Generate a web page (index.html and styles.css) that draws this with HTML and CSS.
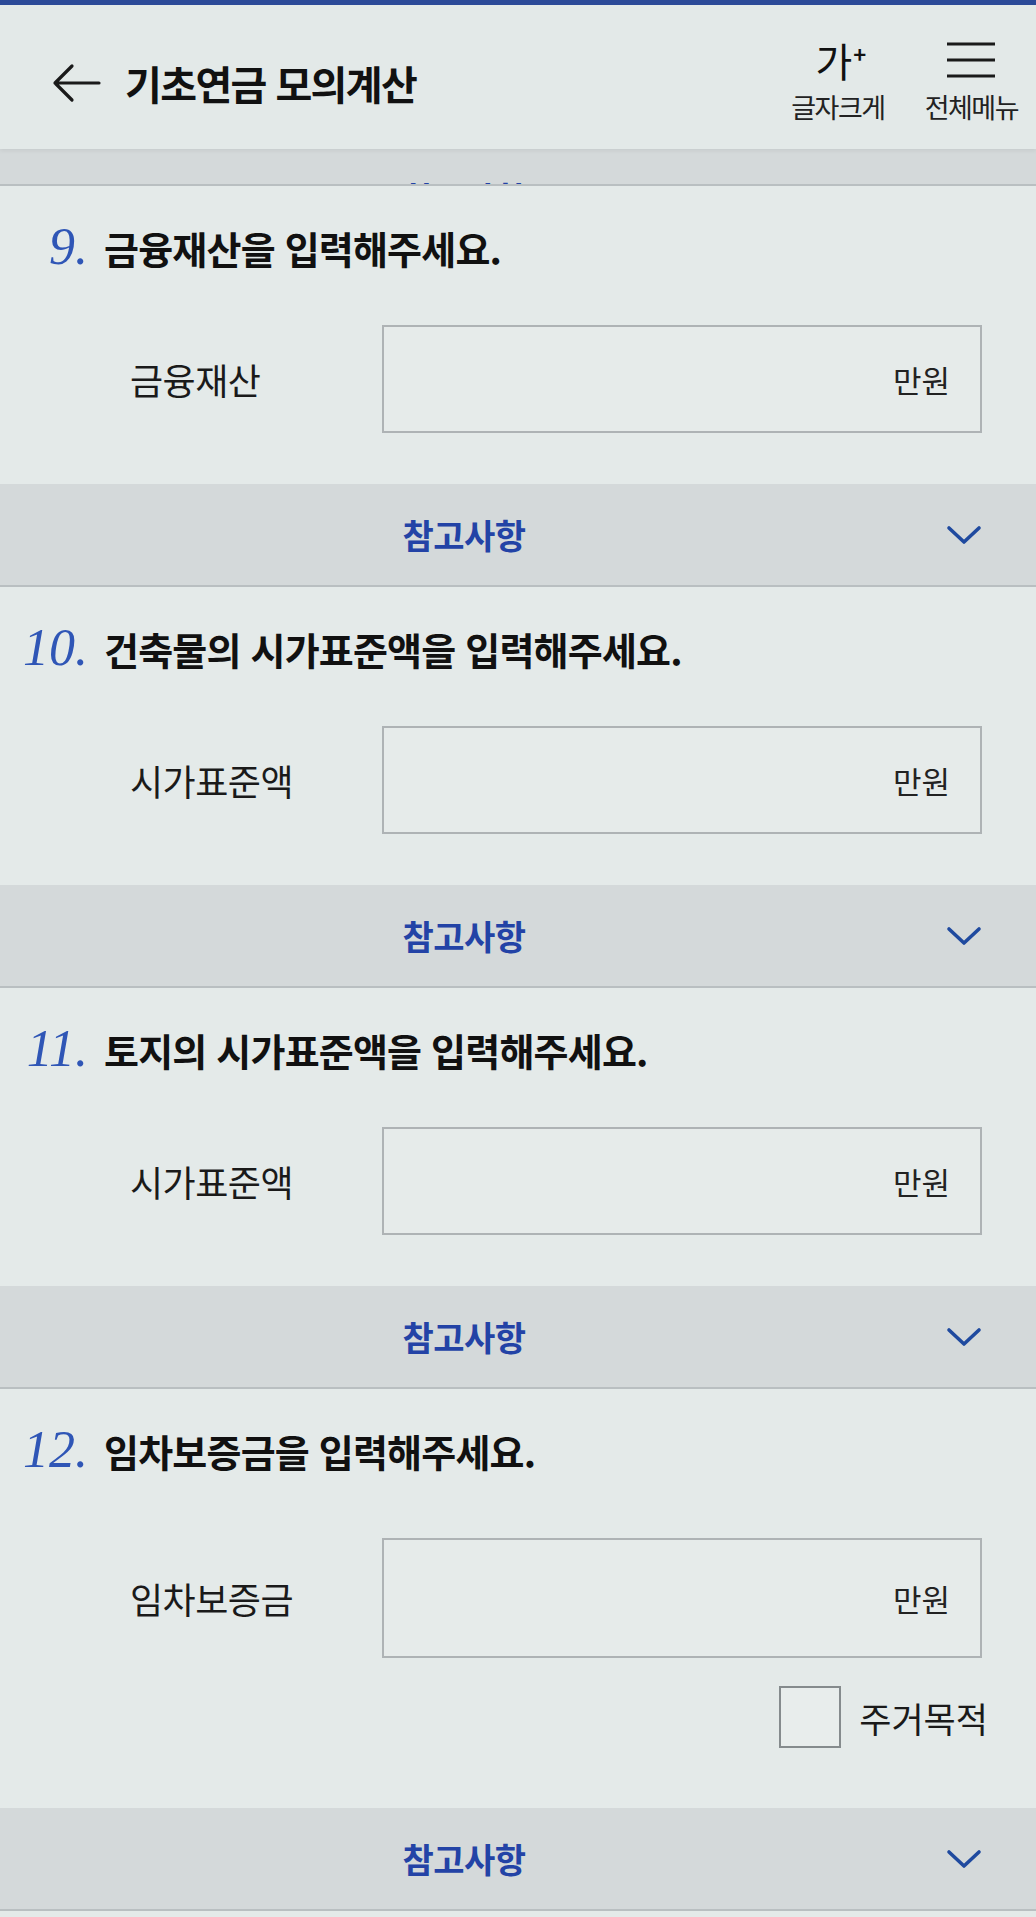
FILE: index.html
```html
<!DOCTYPE html>
<html lang="ko">
<head>
    <meta charset="UTF-8">
    <meta name="viewport" content="width=device-width, initial-scale=1.0">
    <title>기초연금 모의계산</title>
    <link rel="stylesheet" href="styles.css">
</head>
<body>

    <header class="top-bar">
        <div class="top-left">
            <svg class="back-icon" width="50" height="40" viewBox="0 0 50 40">
                <path d="M48 20 H4 M21 3 L4 20 L21 37" fill="none" stroke="#1a1a1a" stroke-width="3.2" stroke-linecap="round" stroke-linejoin="round"/>
            </svg>
            <h1>기초연금 모의계산</h1>
        </div>
        <div class="top-right">
            <div class="tool">
                <span class="font-big">가<sup>+</sup></span>
                <span class="tool-label">글자크게</span>
            </div>
            <div class="tool">
                <svg class="menu-icon" width="50" height="38" viewBox="0 0 50 38">
                    <path d="M1 3 H49 M1 19 H49 M1 35 H49" stroke="#1a1a1a" stroke-width="3.2"/>
                </svg>
                <span class="tool-label">전체메뉴</span>
            </div>
        </div>
    </header>

    <!-- 이전 항목의 참고사항 (헤더 아래로 일부만 보임) -->
    <div class="note-bar note-peek">
        <span class="note-title">참고사항</span>
    </div>

    <section class="question">
        <h2><span class="num">9.</span>금융재산을 입력해주세요.</h2>
        <div class="field">
            <label for="q9">금융재산</label>
            <div class="input-box" id="q9"><span class="unit">만원</span></div>
        </div>
    </section>
    <div class="note-bar">
        <span class="note-title">참고사항</span>
        <svg class="chevron" width="36" height="20" viewBox="0 0 36 20"><path d="M3 3 L18 17 L33 3" fill="none" stroke="#1f4a9f" stroke-width="3.6" stroke-linecap="round" stroke-linejoin="round"/></svg>
    </div>

    <section class="question">
        <h2><span class="num">10.</span>건축물의 시가표준액을 입력해주세요.</h2>
        <div class="field">
            <label for="q10">시가표준액</label>
            <div class="input-box" id="q10"><span class="unit">만원</span></div>
        </div>
    </section>
    <div class="note-bar">
        <span class="note-title">참고사항</span>
        <svg class="chevron" width="36" height="20" viewBox="0 0 36 20"><path d="M3 3 L18 17 L33 3" fill="none" stroke="#1f4a9f" stroke-width="3.6" stroke-linecap="round" stroke-linejoin="round"/></svg>
    </div>

    <section class="question">
        <h2><span class="num">11.</span>토지의 시가표준액을 입력해주세요.</h2>
        <div class="field">
            <label for="q11">시가표준액</label>
            <div class="input-box" id="q11"><span class="unit">만원</span></div>
        </div>
    </section>
    <div class="note-bar">
        <span class="note-title">참고사항</span>
        <svg class="chevron" width="36" height="20" viewBox="0 0 36 20"><path d="M3 3 L18 17 L33 3" fill="none" stroke="#1f4a9f" stroke-width="3.6" stroke-linecap="round" stroke-linejoin="round"/></svg>
    </div>

    <section class="question last">
        <h2><span class="num">12.</span>임차보증금을 입력해주세요.</h2>
        <div class="field">
            <label for="q12">임차보증금</label>
            <div class="input-box tall" id="q12"><span class="unit">만원</span></div>
        </div>
        <div class="check-row">
            <span class="check-box"></span>
            <span class="check-label">주거목적</span>
        </div>
    </section>
    <div class="note-bar">
        <span class="note-title">참고사항</span>
        <svg class="chevron" width="36" height="20" viewBox="0 0 36 20"><path d="M3 3 L18 17 L33 3" fill="none" stroke="#1f4a9f" stroke-width="3.6" stroke-linecap="round" stroke-linejoin="round"/></svg>
    </div>

</body>
</html>
```

FILE: styles.css
```css
body {
    font-family: "Noto Sans CJK KR", "Noto Sans", sans-serif;
    background-color: #e4eae9;
    color: #151515;
    margin: 0;
    width: 1036px;
    overflow: hidden;
}
.top-bar {
    height: 144px;
    border-top: 5px solid #2c4a98;
    background-color: #e3e9e8;
    display: flex;
    justify-content: space-between;
    align-items: center;
    padding: 0 18px 0 51px;
    box-shadow: 0 2px 4px rgba(0, 0, 0, 0.06);
    position: relative;
    z-index: 1;
}
.top-left {
    display: flex;
    align-items: center;
    gap: 24px;
    margin-top: 12px;
}
h1 {
    font-size: 40px;
    font-weight: bold;
    letter-spacing: -1.6px;
    margin: 0;
    color: #111;
}
.top-right {
    display: flex;
    gap: 40px;
    align-items: flex-end;
}
.tool {
    display: flex;
    flex-direction: column;
    align-items: center;
    gap: 10px;
}
.font-big {
    font-size: 40px;
    font-weight: normal;
    line-height: 42px;
    color: #111;
    padding-left: 6px;
}
.font-big sup {
    font-size: 22px;
    font-weight: bold;
    vertical-align: 14px;
    margin-left: 1px;
}
.menu-icon {
    margin: 2px 0;
}
.tool-label {
    font-size: 27px;
    letter-spacing: -1.5px;
    color: #222;
    line-height: 32px;
}

/* 참고사항 접이식 바 */
.note-bar {
    height: 101px;
    background-color: #d4d9da;
    border-bottom: 2px solid #b9bfc1;
    display: grid;
    grid-template-columns: 1fr 36px;
    align-items: center;
    gap: 18px;
    padding-right: 54px;
}
.note-title {
    text-align: center;
    font-size: 34px;
    font-weight: bold;
    color: #2343a6;
    letter-spacing: -0.5px;
}
.note-peek {
    height: 35px;
    overflow: hidden;
    align-items: end;
}
.note-peek .note-title {
    margin-bottom: -44px;
    line-height: 60px;
}
.chevron {
    display: block;
}

.question {
    padding: 38px 54px 51px 8px;
}
.question h2 {
    display: flex;
    align-items: baseline;
    font-size: 38px;
    font-weight: bold;
    letter-spacing: -0.8px;
    line-height: 46px;
    margin: 0 0 54px;
    color: #111;
}
.num {
    font-family: "Liberation Serif", "DejaVu Serif", serif;
    font-style: italic;
    font-weight: normal;
    font-size: 52px;
    line-height: 46px;
    color: #2f56b6;
    width: 80px;
    text-align: right;
    margin-right: 16px;
    letter-spacing: 0;
}
.field {
    display: flex;
    align-items: center;
}
.field label {
    width: 252px;
    padding-left: 122px;
    font-size: 36px;
    letter-spacing: -0.5px;
    color: #1a1a1a;
}
.input-box {
    flex: 1;
    height: 104px;
    border: 2px solid #aeb3b5;
    background-color: #e6ebea;
    display: flex;
    align-items: center;
    justify-content: flex-end;
    padding-right: 30px;
}
.input-box.tall {
    height: 116px;
}
.unit {
    font-size: 31px;
    color: #222;
}
.question.last {
    padding-bottom: 60px;
}
.question.last h2 {
    margin-bottom: 64px;
}
.check-row {
    display: flex;
    justify-content: flex-end;
    align-items: center;
    gap: 18px;
    margin-top: 28px;
    margin-right: -6px;
}
.check-box {
    width: 58px;
    height: 58px;
    border: 2px solid #858b8d;
    background-color: #e8edec;
}
.check-label {
    font-size: 35px;
    color: #1a1a1a;
}
```
